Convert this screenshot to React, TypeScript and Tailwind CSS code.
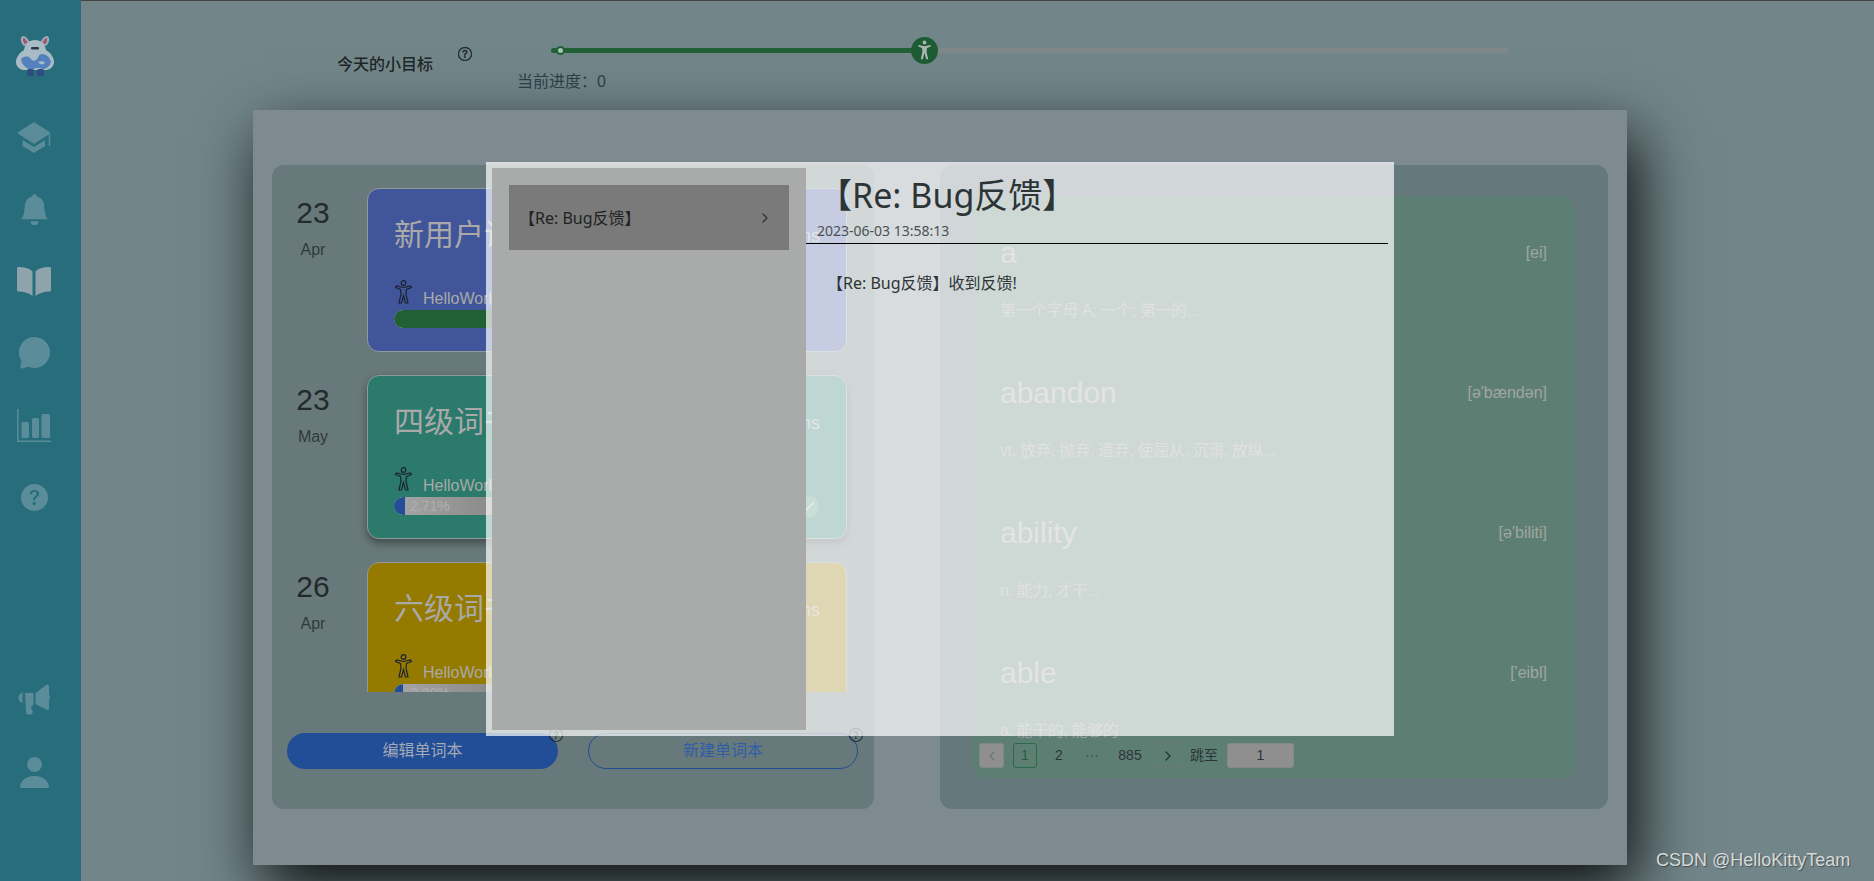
import { BsBellFill, BsQuestionCircle, BsQuestionCircleFill } from 'react-icons/bs';
import { ChevronLeft, ChevronRight, Check } from 'lucide-react';

const books = [
  { day: '23', month: 'Apr', title: '新用户词书', color: 'bg-[#41559a]', percent: 100, label: '', count: '120 terms', active: false },
  { day: '23', month: 'May', title: '四级词书', color: 'bg-[#2b7a6c]', percent: 2.71, label: '2.71%', count: '4615 terms', active: true },
  { day: '26', month: 'Apr', title: '六级词书', color: 'bg-[#957a00]', percent: 2.28, label: '2.28%', count: '2087 terms', active: false },
];

const words = [
  { word: 'a', phonetic: '[ei]', meaning: '第一个字母 A; 一个; 第一的...' },
  { word: 'abandon', phonetic: "[ə'bændən]", meaning: 'vt. 放弃, 抛弃, 遗弃, 使屈从, 沉溺, 放纵...' },
  { word: 'ability', phonetic: "[ə'biliti]", meaning: 'n. 能力, 才干...' },
  { word: 'able', phonetic: "['eibl]", meaning: 'a. 能干的, 能够的' },
];

function Mascot() {
  return (
    <svg width="40" height="42" viewBox="0 0 40 42">
      <path d="M9 11C5 7 5 2 8 1c3 0 6 4 7 8z" fill="#9fb0ba" />
      <path d="M31 11c4-4 4-9 1-10-3 0-6 4-7 8z" fill="#9fb0ba" />
      <path d="M9.500 9C7.500 6 7.500 3.500 8.500 3c1.500 0 3.500 3 4 5z" fill="#a8516f" />
      <path d="M30.500 9c2-3 2-5.500 1-6-1.500 0-3.500 3-4 5z" fill="#a8516f" />
      <path d="M20 5c6 0 10 4 11 10 5 3 8 8 8 12 0 4-3 7-7 8H8c-4-1-7-4-7-8 0-4 3-9 8-12C10 9 14 5 20 5z" fill="#a9bcc6" />
      <path d="M6 24c3-3 7-3 9-1s3 4 6 2 2-6 6-6 8 3 9 8c-1 4-4 6-7 7-3 0-5-2-8-1s-4 2-7 1-8-5-8-10z" fill="#5480bd" />
      <path d="M23 27c3-1 6-1 7 1-2 2-5 2-7-1z" fill="#a9bcc6" />
      <rect x="12" y="34" width="7" height="7" rx="2" fill="#2f4c80" />
      <rect x="22" y="34" width="7" height="7" rx="2" fill="#2f4c80" />
      <rect x="16" y="12" width="8" height="2.500" rx="1" fill="#2b3a47" />
    </svg>
  );
}

function CapIcon() {
  return (
    <svg width="34" height="31" viewBox="0 0 34 31" className="text-[#5a8c99]" fill="currentColor">
      <path d="M17 0 34 11 17 22 0 11Z" />
      <path d="M5.500 18 17 25l11-7v6l-11 7-11.500-7Z" />
      <path d="M32.500 12.500V24" stroke="currentColor" strokeWidth="1.500" />
    </svg>
  );
}

function BookIcon() {
  return (
    <svg width="34" height="29" viewBox="0 0 34 29" className="text-[#8fa3ac]" fill="currentColor">
      <path d="M1.500 0C7 0 12 1 15.500 4.500V29C12 26 7 24.500 1.500 24.500 .5 24.500 0 24 0 23V1.500C0 .5.5 0 1.500 0Z" />
      <path d="M32.500 0C27 0 22 1 18.500 4.500V29C22 26 27 24.500 32.500 24.500c1 0 1.500-.5 1.500-1.500V1.500C34 .5 33.500 0 32.500 0Z" />
    </svg>
  );
}

function ChatIcon() {
  return (
    <svg width="32" height="32" viewBox="0 0 32 32" className="text-[#5a8c99]" fill="currentColor">
      <path d="M16.500 0a15.500 15.500 0 1 1-6 29.800L4.500 31.500Q2 32 2.300 29l1.200-5A15.500 15.500 0 0 1 16.500 0Z" />
    </svg>
  );
}

function ChartIcon() {
  return (
    <svg width="34" height="33" viewBox="0 0 34 33" className="text-[#5a8c99]" fill="currentColor">
      <path d="M.800 0v32.200H34" fill="none" stroke="currentColor" strokeWidth="1.500" />
      <rect x="4.500" y="13" width="7.500" height="16" rx="1.500" />
      <rect x="15" y="9" width="7" height="20" rx="1.500" />
      <rect x="24.500" y="5" width="8.500" height="24" rx="1.500" />
    </svg>
  );
}

function MegaphoneIcon() {
  return (
    <svg width="32" height="32" viewBox="0 0 32 32" className="text-[#5a8c99]" fill="currentColor">
      <path d="M4.500 8C1 10 0 13 .5 15c.5 2 2.500 4 4 4Z" />
      <path d="M7 9h8.500v12c-3 1-3 3-1 5v3c0 2-6 2-6.500 0Z" />
      <path d="M17.500 9 29 .5Q31-.5 31 3v7l1 3-1 3v8q0 3-2 2L17.500 20Z" />
    </svg>
  );
}

function UserIcon() {
  return (
    <svg width="29" height="31" viewBox="0 0 29 31" className="text-[#5a8c99]" fill="currentColor">
      <circle cx="14.500" cy="7.500" r="7.500" />
      <path d="M0 31c0-8 6.500-12 14.500-12S29 23 29 31Z" />
    </svg>
  );
}

// 张开双臂的小人，卡片里是描边，滑块上是实心
function Figure({ className }: { className: string }) {
  return (
    <svg viewBox="0 0 18 24" className={className}>
      <circle cx="9" cy="3" r="2.300" />
      <path d="M1 7.500 6 9.500 6.500 14 4.500 23 7 23 9 15.500 11 23 13.500 23 11.500 14 12 9.500 17 7.500 16 6 9 7.500 2 6Z" />
    </svg>
  );
}

function NavSlot({ children }: { children: React.ReactNode }) {
  return <div className="h-[72px] flex items-center justify-center">{children}</div>;
}

function Sidebar() {
  return (
    <aside className="w-[81px] shrink-0 h-full bg-[#286d7c] pt-[35px] pr-[13px]">
      <div className="flex justify-center h-[42px] mb-[24px] pl-[1px]">
        <Mascot />
      </div>
      <NavSlot><CapIcon /></NavSlot>
      <NavSlot><BsBellFill className="text-[#5a8c99]" size={31} /></NavSlot>
      <NavSlot><BookIcon /></NavSlot>
      <NavSlot><ChatIcon /></NavSlot>
      <NavSlot><ChartIcon /></NavSlot>
      <NavSlot><BsQuestionCircleFill className="text-[#5a8c99]" size={27} /></NavSlot>
      <div className="h-[131px]" />
      <NavSlot><MegaphoneIcon /></NavSlot>
      <NavSlot><UserIcon /></NavSlot>
    </aside>
  );
}

function ProgressBar({ percent, label }: { percent: number; label: string }) {
  return (
    <div className="relative h-[18px] w-[400px] rounded-l-full bg-[linear-gradient(90deg,#a5a5a5,#8a8a8a_25%)] overflow-hidden">
      <div
        className={percent === 100 ? 'h-full bg-[#216035] rounded-l-full' : 'h-full min-w-[9px] bg-[#224d97] rounded-l-full'}
        style={{ width: `${percent}%` }}
      />
      <span className="absolute left-[16px] top-0 text-[14px] leading-[18px] text-[#b0b0b0]">{label}</span>
    </div>
  );
}

function BookRow({ book }: { book: (typeof books)[number] }) {
  return (
    <div className="flex">
      <div className="w-[54px] shrink-0 flex flex-col items-center pt-[6px] mr-[27px]">
        <span className="text-[30px] leading-[38px] text-[#222a2c]">{book.day}</span>
        <span className="text-[16px] leading-[24px] mt-[6px] text-[#30393b]">{book.month}</span>
      </div>
      <div className={`relative w-[480px] h-[164px] shrink-0 rounded-[12px] border border-[#8f9a9c] px-[26px] pt-[26px] ${book.color} ${book.active ? 'shadow-[0_4px_8px_rgba(0,0,0,0.4)]' : ''}`}>
        <div className="flex items-center justify-between">
          <span className="text-[30px] leading-[40px] text-[#a9a9a9]">{book.title}</span>
          <span className="text-[18px] text-[#a9a9a9] mt-[2px]">{book.count}</span>
        </div>
        <div className="relative h-[30px] mt-[25px]">
          <Figure className="absolute left-0 top-0 w-[19px] h-[24px] fill-none stroke-[#1d2430] stroke-[1.2]" />
          <span className="absolute left-[29px] top-[9px] text-[16px] leading-[20px] text-[#a9a9a9]">HelloWorld</span>
        </div>
        <ProgressBar percent={book.percent} label={book.label} />
        {book.active && (
          <span className="absolute right-[27px] bottom-[20px] w-[23px] h-[23px] rounded-full bg-[#4f8f7d] flex items-center justify-center">
            <Check className="text-[#b5c5c0]" size={16} />
          </span>
        )}
      </div>
    </div>
  );
}

function LeftPanel() {
  return (
    <section className="w-[602px] h-[644px] shrink-0 rounded-[12px] bg-[#68797b] pt-[23px] pl-[14px]">
      <div className="h-[504px] overflow-hidden flex flex-col gap-[23px]">
        {books.map((b) => (
          <BookRow key={b.day + b.month} book={b} />
        ))}
      </div>
      <div className="flex gap-[30px] mt-[41px] ml-[1px]">
        <div className="relative">
          <button className="block w-[271px] h-[36px] rounded-full bg-[#224d97] text-[16px] text-[#a3a9b5]">编辑单词本</button>
          <BsQuestionCircle className="absolute right-[-5px] top-[-5px] text-[#1d2527]" size={14} />
        </div>
        <div className="relative">
          <button className="block w-[270px] h-[36px] rounded-full border border-[#224d97] text-[16px] text-[#2f5ea8]">新建单词本</button>
          <BsQuestionCircle className="absolute right-[-5px] top-[-5px] text-[#1d2527]" size={14} />
        </div>
      </div>
    </section>
  );
}

function Pagination() {
  const box = 'h-[25px] flex items-center justify-center rounded-[3px] text-[14px] text-[#2b3536]';
  return (
    <div className="flex items-center ml-[-21px]">
      <span className={`${box} w-[25px] bg-[#8f8f8f] border border-[#7f8a87]`}><ChevronLeft className="text-[#6f7472]" size={16} /></span>
      <span className={`${box} w-[24px] ml-[9px] border border-[#2a6a48] text-[#22613f]`}>1</span>
      <span className={`${box} w-[20px] ml-[12px]`}>2</span>
      <span className={`${box} w-[20px] ml-[13px] text-[#3f4c4a]`}>···</span>
      <span className={`${box} w-[26px] ml-[15px]`}>885</span>
      <span className={`${box} w-[24px] ml-[13px] border border-[#6b7a76]`}><ChevronRight size={16} /></span>
      <span className={`${box} ml-[10px]`}>跳至</span>
      <span className={`${box} w-[67px] ml-[9px] bg-[#8f8f8f] border border-[#838a88]`}>1</span>
    </div>
  );
}

function RightPanel() {
  return (
    <section className="w-[668px] h-[644px] shrink-0 rounded-[12px] bg-[#65797c] pt-[31px] pl-[33px]">
      <div className="w-[601px] h-[582px] rounded-[12px] bg-[#5d7f73] pt-[34px] px-[27px]">
        <div className="h-[513px] overflow-hidden">
          {words.map((w) => (
            <div key={w.word} className="h-[140px]">
              <div className="flex items-center justify-between h-[46px]">
                <span className="text-[30px] mt-[-2px] text-[#a3a3a3]">{w.word}</span>
                <span className="text-[16px] text-[#a0a6a3]">{w.phonetic}</span>
              </div>
              <p className="mt-[23px] text-[16px] leading-[24px] tracking-[-0.4px] text-[#999999]">{w.meaning}</p>
            </div>
          ))}
        </div>
        <Pagination />
      </div>
    </section>
  );
}

function MessageModal() {
  return (
    <div className="absolute left-[486px] top-[162px] w-[908px] h-[574px] bg-white/70 p-[6px] flex font-['Noto_Sans','Noto_Sans_CJK_SC',sans-serif]">
      <div className="w-[314px] h-full shrink-0 bg-[#a9abaa] pt-[17px] px-[17px]">
        <div className="h-[65px] bg-[#7a7a7a] flex items-center justify-between pl-[10px] pr-[16px] text-[16px] text-[#1e2324]">
          <span>【Re: Bug反馈】</span>
          <ChevronRight className="text-[#333]" size={16} />
        </div>
      </div>
      <div className="flex-1 min-w-0">
        <h2 className="text-[34px] leading-[44px] pl-[12px] pt-[5px] text-[#2d3436]">【Re: Bug反馈】</h2>
        <div className="pl-[11px] pb-[2px] mt-[4px] text-[14px] leading-[20px] text-[#4a5152] border-b border-black">2023-06-03 13:58:13</div>
        <p className="pl-[21px] mt-[27px] text-[16px] leading-[24px] text-[#2d3436]">【Re: Bug反馈】收到反馈!</p>
      </div>
    </div>
  );
}

export default function App() {
  return (
    <div className="relative w-[1874px] h-[881px] overflow-hidden flex bg-[#72868a] font-['Liberation_Sans','Noto_Sans_CJK_SC',sans-serif]">
      <Sidebar />
      <main className="flex-1 min-w-0 border-t border-[#444]">
        {/* 今日目标 */}
        <div className="h-[109px] relative">
          <div className="flex items-start">
            <span className="ml-[256px] mt-[54px] text-[16px] leading-[20px] font-medium text-[#1d2527]">今天的小目标</span>
            <BsQuestionCircle className="ml-[25px] mt-[46px] text-[#1d2527] stroke-[0.4]" size={14} />
            <div className="ml-[79px] mt-[46px] w-[957px] flex items-center h-[6px] relative">
              <div className="h-[5px] w-[374px] rounded-l-full bg-[#216035]" />
              <div className="h-[5px] flex-1 bg-[#7f8789]" />
              <span className="absolute left-[5px] w-[9px] h-[9px] rounded-full bg-[#a9c0b0] border-2 border-[#216035]" />
              <span className="absolute left-[360px] w-[27px] h-[27px] rounded-full bg-[#1d5c33] flex items-center justify-center">
                <Figure className="w-[15px] h-[20px] fill-[#a9b5b0]" />
              </span>
            </div>
          </div>
          <span className="absolute left-[436px] top-[71px] text-[16px] leading-[20px] text-[#2c3e44]">当前进度：0</span>
        </div>
        {/* 单词本 */}
        <div className="ml-[172px] w-[1374px] h-[755px] bg-[#7d8b91] shadow-[10px_25px_60px_rgba(0,0,0,0.9)] pt-[55px] pl-[19px] flex gap-[66px]">
          <LeftPanel />
          <RightPanel />
        </div>
      </main>
      <MessageModal />
      <span className="absolute left-[1656px] top-[850px] text-[18px] leading-[20px] text-[#d5d9da] [text-shadow:1px_1px_1px_rgba(0,0,0,0.4)]">CSDN @HelloKittyTeam</span>
    </div>
  );
}
